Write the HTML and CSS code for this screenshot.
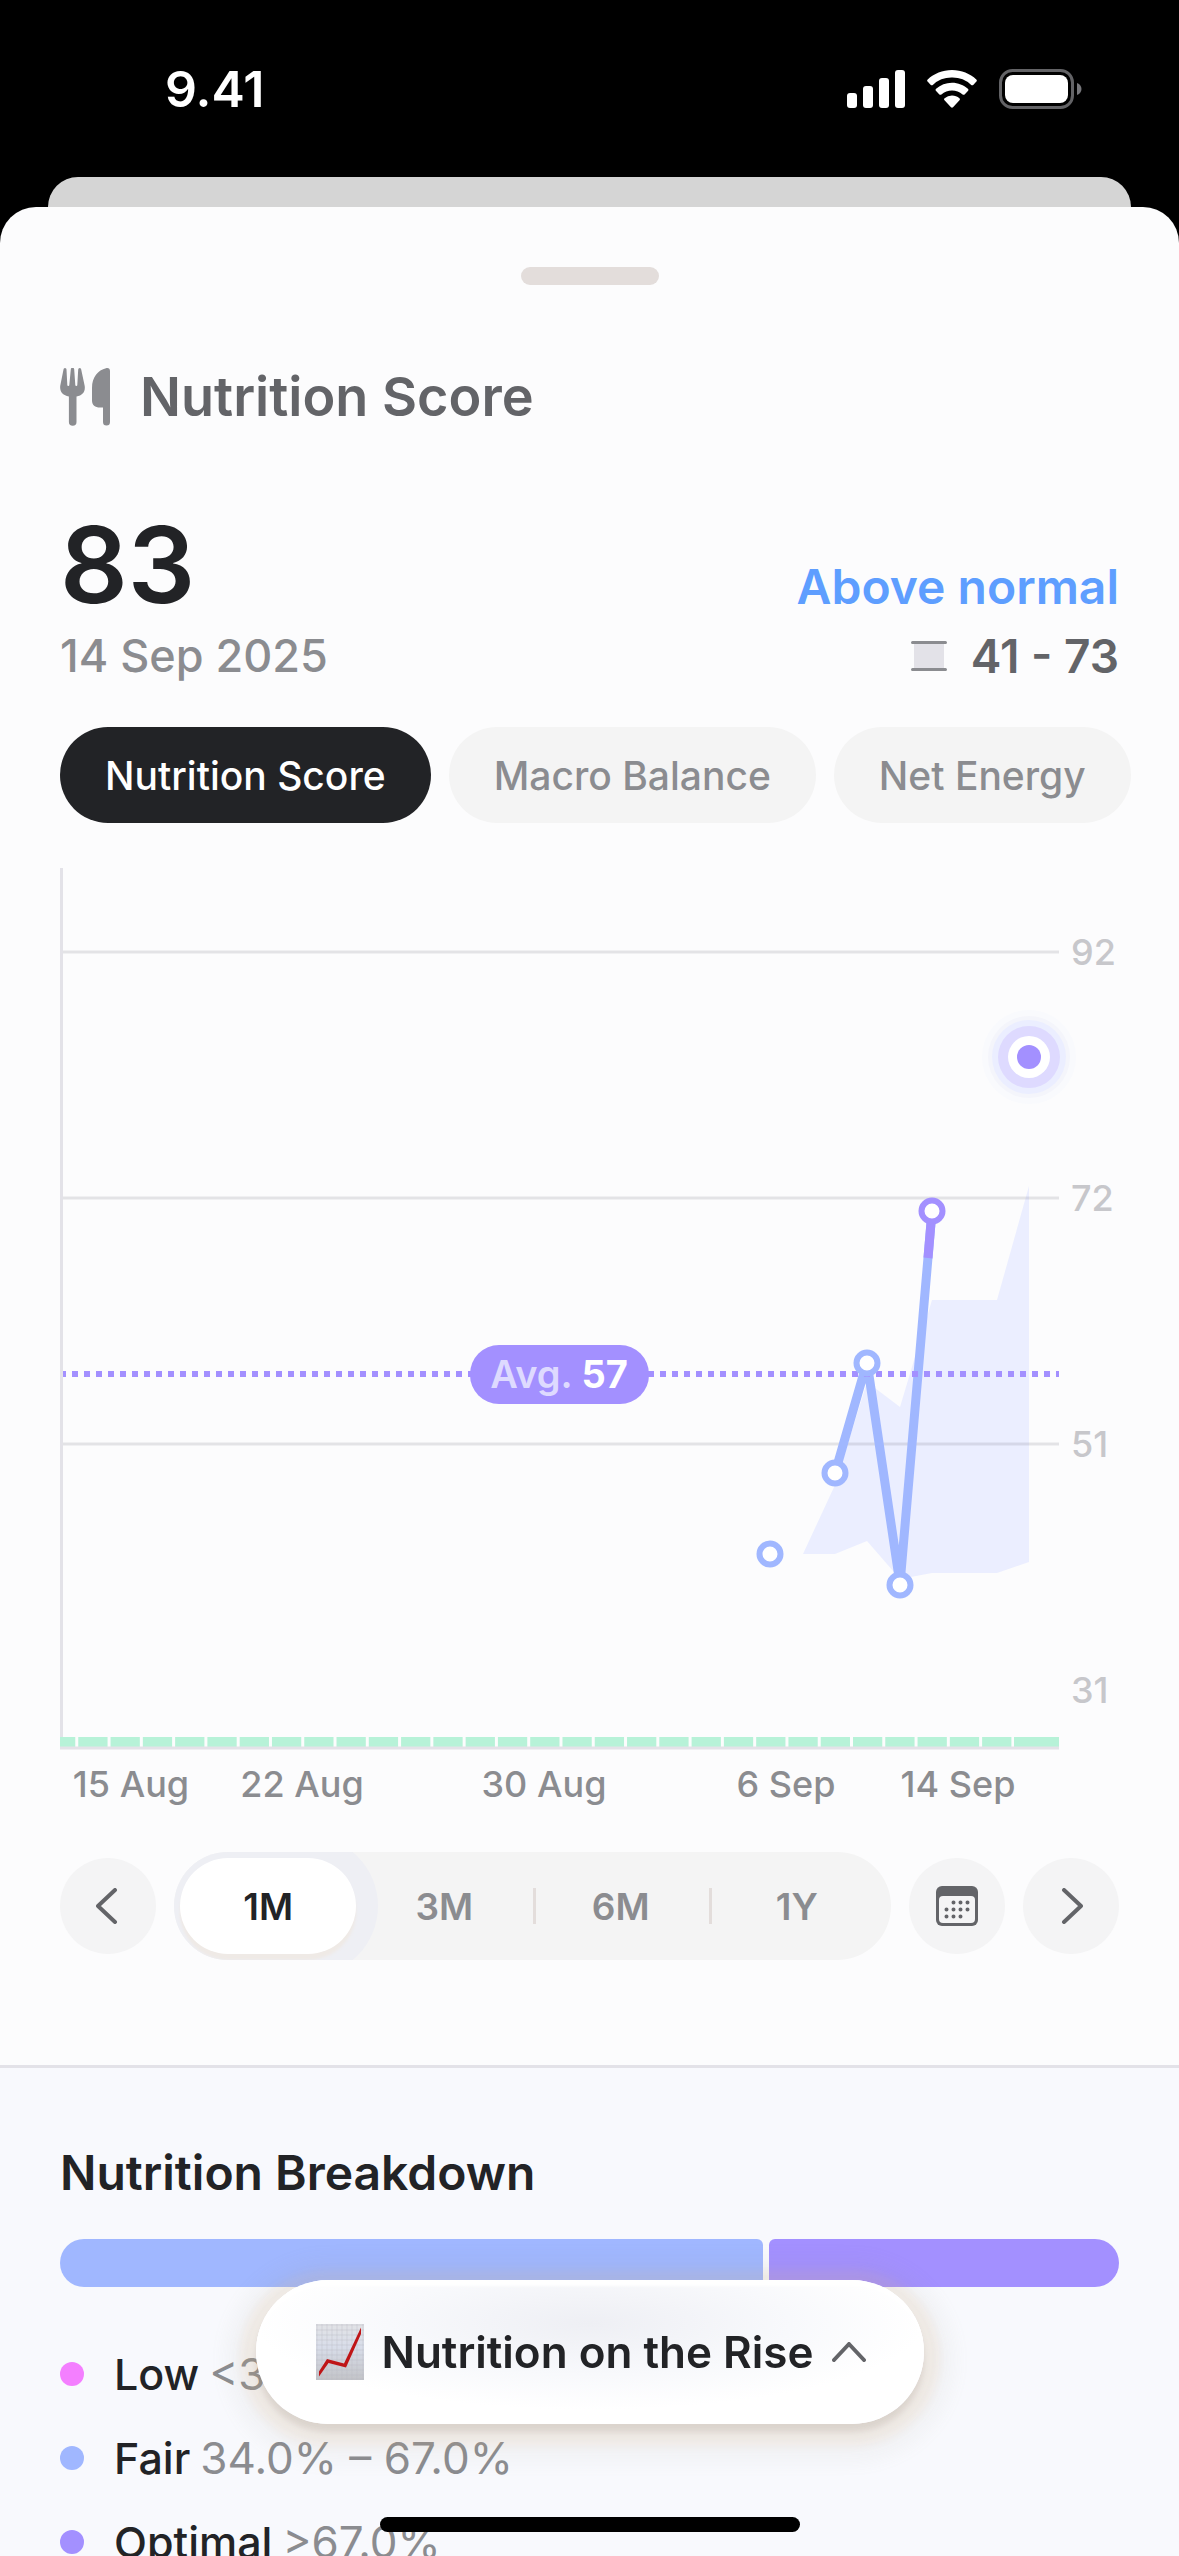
FILE: index.html
```html
<!DOCTYPE html>
<html lang="en">
<head>
    <meta charset="UTF-8">
    <meta name="viewport" content="width=device-width, initial-scale=1.0">
    <title>Nutrition Score</title>
    <link rel="stylesheet" href="styles.css">
</head>
<body>

    <header class="status-bar">
        <span class="clock">9.41</span>
        <div class="status-icons">
            <svg width="58" height="38" viewBox="0 0 58 38" fill="#fff">
                <rect x="0" y="23" width="10" height="15" rx="3"/>
                <rect x="16" y="16" width="10" height="22" rx="3"/>
                <rect x="32" y="8" width="10" height="30" rx="3"/>
                <rect x="48" y="0" width="10" height="38" rx="3"/>
            </svg>
            <svg width="50" height="38" viewBox="0 0 50 38" fill="#fff">
                <path d="M25 0C34.600 0 43 3.600 49.300 9.400c.700.700.700 1.500.1 2.200l-3.200 3.300c-.6.600-1.400.6-2 0A27.500 27.500 0 0 0 25 7.600 27.500 27.500 0 0 0 5.800 14.900c-.6.600-1.400.6-2 0L.6 11.600c-.6-.7-.6-1.500.1-2.200C7 3.600 15.400 0 25 0z"/>
                <path d="M25 12.700c6.100 0 11.700 2.300 15.900 6.100.7.700.7 1.500 0 2.200l-3.300 3.400c-.6.600-1.400.6-2 0A16 16 0 0 0 25 20.400a16 16 0 0 0-10.600 4c-.6.600-1.400.6-2 0L9.100 21c-.7-.7-.7-1.500 0-2.200A23.600 23.600 0 0 1 25 12.700z"/>
                <path d="M25 25.500c2.800 0 5.400 1 7.400 2.700.7.600.7 1.500.1 2.100l-6.500 7c-.6.600-1.400.6-2 0l-6.500-7c-.6-.6-.6-1.500.1-2.100A11.400 11.400 0 0 1 25 25.500z"/>
            </svg>
            <svg width="83" height="40" viewBox="0 0 83 40">
                <rect x="1.500" y="1.500" width="72" height="37" rx="12" fill="none" stroke="#636366" stroke-width="3"/>
                <rect x="6" y="6" width="63" height="28" rx="8" fill="#fff"/>
                <path d="M78 14c3 1 4.500 3.500 4.500 6s-1.500 5-4.500 6z" fill="#77777b"/>
            </svg>
        </div>
    </header>

    <div class="back-card"></div>

    <main class="sheet">
        <div class="handle"></div>

        <section class="score">
            <h1 class="title">
                <svg width="50" height="58" viewBox="0 0 50 58" fill="#8b8c90">
                    <path d="M3.500 1.500a1.500 1.500 0 0 1 3 0L7.300 17a1 1 0 0 0 2 0L10.800 1.500a1.700 1.700 0 0 1 3.400 0L15.300 17a1 1 0 0 0 2 0L18.200 1.500a1.500 1.500 0 0 1 3 0L24.700 18c.8 6-2.200 9.500-8.200 10.500V54a3.800 3.800 0 0 1-7.600 0V28.500C2.900 27.500-.4 24 .2 18z"/>
                    <path d="M32 20C32 9 38 2 46 .2 48.500-.4 50 .6 50 3v51a3.500 3.500 0 0 1-7 0V39.500h-3c-5 0-8-2.500-8-7z"/>
                </svg>
                Nutrition Score
            </h1>

            <div class="summary">
                <div>
                    <p class="value">83</p>
                    <p class="date">14 Sep 2025</p>
                </div>
                <div class="summary-right">
                    <p class="status">Above normal</p>
                    <p class="range">
                        <svg width="36" height="30" viewBox="0 0 36 30">
                            <rect x="3" y="2" width="30" height="26" fill="#e3e2e8"/>
                            <path d="M1.500 1.500h33M1.500 28.500h33" stroke="#8b8c90" stroke-width="3" stroke-linecap="round"/>
                        </svg>
                        41 - 73
                    </p>
                </div>
            </div>

            <div class="chips">
                <button class="chip active">Nutrition Score</button>
                <button class="chip">Macro Balance</button>
                <button class="chip">Net Energy</button>
            </div>

            <svg class="chart" viewBox="0 0 1059 944" role="img" aria-label="Nutrition score, 15 Aug to 14 Sep">
                <!-- normal range -->
                <path class="band" d="M743 686l32-69 32-103 33 25 32-107h65l32-114v376l-32 11h-65l-32 6-33-38-32 13z"/>

                <!-- grid -->
                <path class="grid" d="M3 84h996M3 330h996M3 576h996"/>
                <path class="axis" d="M1.500 0v880"/>
                <g class="y-labels">
                    <text x="1011" y="97">92</text>
                    <text x="1011" y="343">72</text>
                    <text x="1011" y="589">51</text>
                    <text x="1011" y="835">31</text>
                </g>

                <!-- logged days -->
                <path class="days" d="M0 874h953"/>
                <path class="last-day" d="M954 874h45"/>
                <path class="axis" d="M0 880h999"/>

                <!-- score line, purple from the optimal threshold up -->
                <path class="line" d="M775 605l32-111 33 222 32-373"/>
                <path class="line optimal" d="M868 390l4-47"/>
                <path class="average" d="M3 506h996"/>
                <g class="points">
                    <circle cx="710" cy="686" r="10.500"/>
                    <circle cx="775" cy="605" r="10.500"/>
                    <circle cx="807" cy="495" r="10.500"/>
                    <circle cx="840" cy="717" r="10.500"/>
                    <circle class="optimal" cx="872" cy="343" r="10.500"/>
                </g>
                <circle cx="969" cy="189" r="47" fill="#f9fafd"/>
                <circle cx="969" cy="189" r="41" fill="#f4f5fb"/>
                <circle cx="969" cy="189" r="37" fill="#ebeeff"/>
                <circle cx="969" cy="189" r="31" fill="#dedaff"/>
                <circle cx="969" cy="189" r="21" fill="#fff"/>
                <circle cx="969" cy="189" r="12" fill="#a390ff"/>

                <rect x="410" y="477" width="179" height="59" rx="29" fill="#a390ff"/>
                <text class="average-label" x="499" y="520">Avg. <tspan>57</tspan></text>

                <g class="x-labels">
                    <text x="71" y="929">15 Aug</text>
                    <text x="242" y="929">22 Aug</text>
                    <text x="484" y="929">30 Aug</text>
                    <text x="726" y="929">6 Sep</text>
                    <text x="898" y="929">14 Sep</text>
                </g>
            </svg>

            <div class="controls">
                <button class="round-button" aria-label="Previous">
                    <svg width="24" height="36" viewBox="0 0 24 36"><path d="M19 2L2 18l17 16"/></svg>
                </button>
                <div class="periods">
                    <button class="period selected">1M</button>
                    <button class="period">3M</button>
                    <button class="period">6M</button>
                    <button class="period">1Y</button>
                </div>
                <button class="round-button" aria-label="Pick a date">
                    <svg width="42" height="40" viewBox="0 0 42 40">
                        <rect x="0" y="0" width="42" height="40" rx="6" fill="#636468"/>
                        <rect x="3" y="10" width="36" height="27" rx="4" fill="#f4f4f5"/>
                        <path d="M17.500 16.500h0M24.500 16.500h0M31.500 16.500h0M10.500 23.500h0M17.500 23.500h0M24.500 23.500h0M31.500 23.500h0M10.500 30.500h0M17.500 30.500h0M24.500 30.500h0"/>
                    </svg>
                </button>
                <button class="round-button" aria-label="Next">
                    <svg width="24" height="36" viewBox="0 0 24 36"><path d="M5 2l17 16L5 34"/></svg>
                </button>
            </div>
        </section>

        <section class="breakdown">
            <h2>Nutrition Breakdown</h2>
            <div class="bar">
                <span class="bar-part fair" style="flex-grow: 66.8"></span>
                <span class="bar-part optimal" style="flex-grow: 33.2"></span>
            </div>
            <ul class="legend">
                <li><span class="dot low"></span>Low <span class="percent">&lt;34.0%</span></li>
                <li><span class="dot fair"></span>Fair <span class="percent">34.0% – 67.0%</span></li>
                <li><span class="dot optimal"></span>Optimal <span class="percent">&gt;67.0%</span></li>
            </ul>
        </section>
    </main>

    <button class="insight">
        <svg width="48" height="56" viewBox="0 0 48 56">
            <defs>
                <linearGradient id="paper" x1="0" y1="0" x2="0" y2="1">
                    <stop offset="0" stop-color="#e2e3e6"/>
                    <stop offset="0.4" stop-color="#d9deea"/>
                    <stop offset="1" stop-color="#c3c4c8"/>
                </linearGradient>
            </defs>
            <rect width="48" height="56" fill="url(#paper)"/>
            <path d="M0 1h48M0 6h48M0 11h48M0 16h48M0 21h48M0 26h48M0 31h48M0 36h48M0 41h48M0 46h48M0 51h48M0 55h48M1 0v56M6 0v56M11 0v56M16 0v56M21 0v56M26 0v56M31 0v56M36 0v56M41 0v56M47 0v56" stroke="#b9bcc6" stroke-opacity=".4"/>
            <path d="M3 52.500L12.500 39 30 43.500 45 10V3.500L28 39.500 11 35 3 47.500z" fill="#bf1517"/>
        </svg>
        Nutrition on the Rise
        <svg class="chevron" width="34" height="20" viewBox="0 0 34 20"><path d="M2 18L17 2l15 16"/></svg>
    </button>
    <div class="home-indicator"></div>

</body>
</html>
```
FILE: styles.css
```css
* {
    box-sizing: border-box;
}
body {
    display: flex;
    flex-direction: column;
    height: 100vh;
    margin: 0;
    overflow: hidden;
    background: #000;
    color: #222326;
    font-family: Inter, "Liberation Sans", sans-serif;
}
h1, h2, p, ul {
    margin: 0;
    padding: 0;
}
button {
    padding: 0;
    border: none;
    font-family: inherit;
    cursor: pointer;
}
svg {
    display: block;
    flex-shrink: 0;
}
.status-bar {
    display: flex;
    flex-shrink: 0;
    align-items: center;
    justify-content: space-between;
    height: 177px;
    padding: 0 97px 0 165px;
    color: #fff;
}
.clock {
    font-size: 50px;
    font-weight: 600;
}
.status-icons {
    display: flex;
    align-items: center;
    gap: 22px;
}
.back-card {
    flex-shrink: 0;
    height: 30px;
    margin: 0 48px;
    border-radius: 30px 30px 0 0;
    background: #d5d5d5;
}
.sheet {
    flex: 1;
    min-height: 0;
    overflow: hidden;
    border-radius: 36px 36px 0 0;
    background: #fcfcfd;
}
.handle {
    width: 138px;
    height: 18px;
    margin: 60px auto 80px;
    border-radius: 9px;
    background: #e3dddb;
}
.score {
    padding: 0 60px 105px;
}
.title {
    display: flex;
    align-items: center;
    gap: 30px;
    margin-bottom: 82px;
    color: #636468;
    font-size: 54px;
    font-weight: 600;
    line-height: 64px;
}
.summary {
    display: flex;
    align-items: flex-end;
    justify-content: space-between;
    margin-bottom: 46px;
}
.value {
    margin-bottom: 12px;
    font-size: 106px;
    font-weight: 600;
    line-height: 108px;
}
.date {
    color: #8b8c90;
    font-size: 45px;
    font-weight: 500;
    line-height: 50px;
}
.summary-right {
    display: flex;
    flex-direction: column;
    align-items: flex-end;
    gap: 12px;
}
.status {
    color: #5e9eff;
    font-size: 48px;
    font-weight: 600;
    line-height: 64px;
}
.range {
    display: flex;
    align-items: center;
    gap: 24px;
    color: #636468;
    font-size: 46px;
    font-weight: 600;
    line-height: 50px;
}
.chips {
    display: flex;
    gap: 18px;
    margin: 0 -60px 45px 0;
    overflow: hidden;
}
.chip {
    flex-shrink: 0;
    height: 96px;
    padding: 0 45px;
    border-radius: 48px;
    background: #f4f4f4;
    color: #8b8c90;
    font-size: 39px;
    font-weight: 500;
}
.chip.active {
    background: #222326;
    color: #fff;
}

/* chart */
.chart {
    width: 100%;
    height: auto;
    margin-bottom: 40px;
    overflow: visible;
    font-size: 36px;
    font-weight: 500;
}
.band {
    fill: #ebeeff;
}
.grid,
.axis {
    fill: none;
    stroke: #e3e2e8;
    stroke-width: 3px;
}
.grid {
    stroke: rgba(99, 100, 115, 0.16);
}
.y-labels {
    fill: #c7c7cb;
}
.x-labels {
    fill: #8b8c90;
    text-anchor: middle;
}
.days,
.last-day {
    stroke: #b7f2d8;
    stroke-width: 10px;
}
.days {
    stroke-dasharray: 29.28px 3px;
    stroke-dashoffset: 14px;
}
.line {
    fill: none;
    stroke: #a0b7ff;
    stroke-width: 9px;
}
.line.optimal {
    stroke: #a390ff;
}
.points circle {
    fill: #fff;
    stroke: #a0b7ff;
    stroke-width: 6px;
}
.points .optimal {
    stroke: #a390ff;
}
.average {
    stroke: #a390ff;
    stroke-width: 6px;
    stroke-dasharray: 6px 6px;
    stroke-dashoffset: 3px;
}
.average-label {
    fill: #dedaff;
    font-size: 38px;
    font-weight: 600;
    text-anchor: middle;
}
.average-label tspan {
    fill: #fff;
    font-weight: 700;
}

/* period picker */
.controls {
    display: flex;
    align-items: center;
    gap: 18px;
}
.round-button {
    display: flex;
    flex-shrink: 0;
    align-items: center;
    justify-content: center;
    width: 96px;
    height: 96px;
    border-radius: 50%;
    background: #f4f4f5;
}
.round-button path,
.chevron path {
    fill: none;
    stroke: #636468;
    stroke-width: 4px;
    stroke-linecap: round;
    stroke-linejoin: round;
}
.periods {
    display: flex;
    flex: 1;
    height: 108px;
    padding: 6px;
    overflow: hidden;
    border-radius: 54px;
    background: #f4f4f4;
}
.period {
    display: flex;
    flex: 1;
    align-items: center;
    justify-content: center;
    position: relative;
    border-radius: 48px;
    background: none;
    color: #8b8c90;
    font-size: 37px;
    font-weight: 600;
}
.period.selected {
    background: #fff;
    box-shadow: 0 6px 3px #efeae6, 0 0 0 22px #eeeff4;
    color: #222326;
}
.period:nth-child(n + 3)::before {
    content: "";
    position: absolute;
    left: 0;
    width: 3px;
    height: 36px;
    background: #e3dddb;
}

/* breakdown */
.breakdown {
    padding: 73px 60px;
    border-top: 3px solid #e3e2e8;
    background: #f8f9fd;
}
.breakdown h2 {
    margin-bottom: 34px;
    font-size: 48px;
    font-weight: 600;
    line-height: 64px;
}
.bar {
    display: flex;
    gap: 6px;
    height: 48px;
    margin-bottom: 45px;
}
.bar-part {
    border-radius: 6px;
}
.bar-part:first-child {
    border-radius: 24px 6px 6px 24px;
}
.bar-part:last-child {
    border-radius: 6px 24px 24px 6px;
}
.low {
    background: #f47fff;
}
.fair {
    background: #a0b7ff;
}
.bar-part.optimal,
.dot.optimal {
    background: #a390ff;
}
.legend {
    list-style: none;
    font-size: 43px;
    font-weight: 500;
}
.legend li {
    display: flex;
    align-items: center;
    height: 84px;
}
.dot {
    width: 24px;
    height: 24px;
    margin-right: 30px;
    border-radius: 50%;
}
.percent {
    margin-left: 10px;
    color: #8b8c90;
    font-size: 44px;
    font-weight: 400;
}

/* floating over the sheet */
.insight {
    display: flex;
    align-items: center;
    justify-content: center;
    gap: 18px;
    position: fixed;
    bottom: 132px;
    left: 50%;
    height: 144px;
    padding: 0 58px 0 60px;
    transform: translateX(-50%);
    border-radius: 72px;
    background: radial-gradient(ellipse 50% 60% at 50% 30%, #eeeff4, #f8f9fc 60%, #fff);
    box-shadow: 0 8px 6px rgba(130, 110, 100, 0.18), 0 6px 8px 16px rgba(220, 180, 130, 0.14), 0 8px 16px 32px rgba(150, 150, 140, 0.06), inset 0 6px 3px #fff;
    color: #222326;
    font-size: 44px;
    font-weight: 600;
    white-space: nowrap;
}
.home-indicator {
    position: fixed;
    bottom: 24px;
    left: 50%;
    width: 420px;
    height: 15px;
    transform: translateX(-50%);
    border-radius: 8px;
    background: #000;
}
```
